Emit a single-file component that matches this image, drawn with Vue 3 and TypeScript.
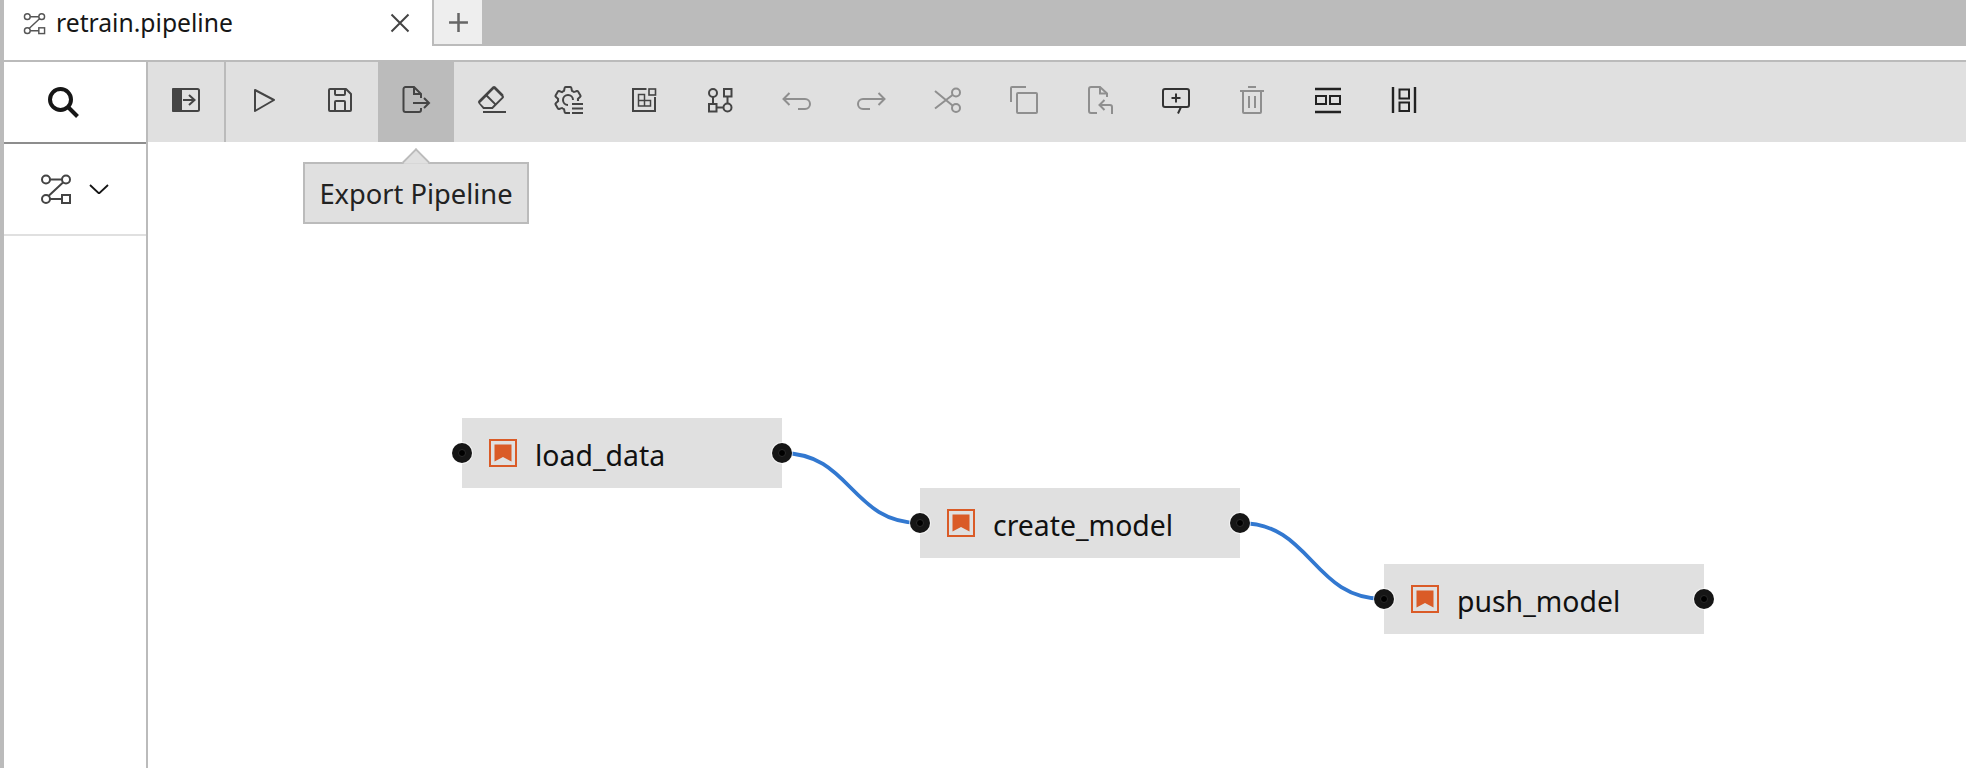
<script setup lang="ts">
interface PipelineNode {
  label: string
  x: number
  y: number
}

const canvasX = 148
const canvasY = 142
const nodes: PipelineNode[] = [
  { label: 'load_data', x: 462, y: 418 },
  { label: 'create_model', x: 920, y: 488 },
  { label: 'push_model', x: 1384, y: 564 },
]

const place = (n: PipelineNode) => ({
  left: `${n.x - canvasX}px`,
  top: `${n.y - canvasY}px`,
})

const links = nodes.slice(0, -1).map((n, i) => {
  const next = nodes[i + 1]
  const x1 = n.x + 320 - canvasX
  const y1 = n.y + 35 - canvasY
  const x2 = next.x - canvasX
  const y2 = next.y + 35 - canvasY
  const mid = (x1 + x2) / 2
  return `M${x1} ${y1}C${mid} ${y1} ${mid} ${y2} ${x2} ${y2}`
})
</script>

<template>
  <div class="page">
    <header class="tabbar">
      <div class="tab">
        <svg class="tab-icon" viewBox="0 0 32 32" fill="none" stroke="currentColor" stroke-width="2">
          <circle cx="6" cy="6.500" r="4" />
          <circle cx="26" cy="6.500" r="4" />
          <circle cx="6" cy="26" r="4" />
          <rect x="22" y="22" width="8" height="8" />
          <path d="M10 6.500H22M10 26H22M23 9.500 8.500 23" />
        </svg>
        <span class="tab-title">retrain.pipeline</span>
        <svg class="tab-close" viewBox="0 0 20 20" fill="none" stroke="currentColor" stroke-width="2">
          <path d="M1.500 1.500 18.500 18.500M18.500 1.500 1.500 18.500" />
        </svg>
      </div>
      <div class="tab-add">
        <svg viewBox="0 0 20 20" fill="none" stroke="currentColor" stroke-width="2.400">
          <path d="M10 1V19M1 10H19" />
        </svg>
      </div>
      <div class="tab-rest"></div>
    </header>

    <div class="body">
      <aside class="sidebar">
        <div class="side-search">
          <svg viewBox="0 0 32 32" fill="none" stroke="#161616" stroke-width="4">
            <circle cx="13.500" cy="13.500" r="10.500" />
            <path d="M21 21 30.500 30.500" />
          </svg>
        </div>
        <div class="side-section">
          <svg class="side-flow" viewBox="0 0 32 32" fill="none" stroke="#444" stroke-width="2">
            <circle cx="6" cy="6.500" r="4" />
            <circle cx="26" cy="6.500" r="4" />
            <circle cx="6" cy="26" r="4" />
            <rect x="22" y="22" width="8" height="8" />
            <path d="M10 6.500H22M10 26H22M23 9.500 8.500 23" />
          </svg>
          <svg class="side-chevron" viewBox="0 0 20 10" fill="none" stroke="#161616" stroke-width="1.800">
            <path d="M1 1 10 9.500 19 1" />
          </svg>
        </div>
      </aside>

      <main class="main">
        <div class="toolbar">
          <button class="tool first">
            <svg viewBox="0 0 32 32" fill="none" stroke="currentColor" stroke-width="2">
              <rect x="3" y="5" width="26" height="22" rx="1.500" />
              <path d="M2 5a1 1 0 0 1 1-1h9v24H3a1 1 0 0 1-1-1Z" fill="currentColor" stroke="none" />
              <path d="M13 16H24M19 11 24.500 16 19 21" />
            </svg>
          </button>
          <div class="divider"></div>
          <button class="tool">
            <svg viewBox="0 0 32 32" fill="none" stroke="currentColor" stroke-width="2">
              <path d="M7 6 26 16 7 27Z" stroke-linejoin="round" />
            </svg>
          </button>
          <button class="tool">
            <svg viewBox="0 0 32 32" fill="currentColor">
              <path d="M27.710 9.290l-5-5A1 1 0 0 0 22 4H6A2 2 0 0 0 4 6V26a2 2 0 0 0 2 2H26a2 2 0 0 0 2-2V10A1 1 0 0 0 27.710 9.290ZM12 6h8v4H12Zm8 20H12V18h8Zm2 0V18a2 2 0 0 0-2-2H12a2 2 0 0 0-2 2v8H6V6h4v4a2 2 0 0 0 2 2h8a2 2 0 0 0 2-2V6.410l4 4V26Z" />
            </svg>
          </button>
          <button class="tool active">
            <svg viewBox="0 0 32 32" fill="none" stroke="currentColor" stroke-width="2">
              <path d="M21 14V10L14 3H5.500A2 2 0 0 0 3.500 5V26A2 2 0 0 0 5.500 28H19A2 2 0 0 0 21 26V24" />
              <path d="M14 3V10H21" />
              <path d="M13 19H28.500M24 14 29 19 24 24" />
            </svg>
          </button>
          <button class="tool">
            <svg viewBox="0 0 32 32" fill="currentColor">
              <path d="M7 27H30v2H7zM27.380 10.510 19.450 2.590a2 2 0 0 0-2.830 0l-14 14a2 2 0 0 0 0 2.830L7.130 25h9.590l10.660-10.660a2 2 0 0 0 0-2.830ZM15.890 23H8L4 19l6.310-6.310 7.930 7.920Zm3.760-3.760-7.920-7.930L18 5 26 12.930Z" />
            </svg>
          </button>
          <button class="tool">
            <svg viewBox="0 0 32 32" fill="none">
              <path fill="currentColor" d="M27 16.760c0-.25 0-.5 0-.76s0-.51 0-.77l1.920-1.680A2 2 0 0 0 29.300 11L26.940 7a2 2 0 0 0-1.730-1 2 2 0 0 0-.64.1l-2.430.82a11.350 11.350 0 0 0-1.310-.75l-.51-2.520a2 2 0 0 0-2-1.610H13.640a2 2 0 0 0-2 1.610l-.51 2.520a11.480 11.480 0 0 0-1.320.75L7.430 6.060A2 2 0 0 0 6.790 6 2 2 0 0 0 5.060 7L2.700 11a2 2 0 0 0 .41 2.510L5 15.240c0 .25 0 .5 0 .76s0 .51 0 .77L3.110 18.450A2 2 0 0 0 2.700 21L5.060 25a2 2 0 0 0 1.730 1 2 2 0 0 0 .64-.1l2.430-.82a11.350 11.350 0 0 0 1.310.75l.51 2.520a2 2 0 0 0 2 1.610h4.720a2 2 0 0 0 2-1.610l.51-2.520a11.480 11.480 0 0 0 1.320-.75l2.430.82a2 2 0 0 0 .64.1 2 2 0 0 0 1.730-1L29.300 21a2 2 0 0 0-.41-2.510ZM25.210 24l-3.430-1.160a8.860 8.860 0 0 1-2.710 1.570L18.360 28H13.640l-.71-3.550a9.360 9.360 0 0 1-2.700-1.570L6.790 24 4.430 20l2.720-2.400a8.900 8.900 0 0 1 0-3.130L4.430 12 6.790 8l3.430 1.160a8.860 8.860 0 0 1 2.710-1.570L13.640 4h4.720l.71 3.550a9.360 9.360 0 0 1 2.700 1.570L25.210 8l2.360 4-2.720 2.400a8.900 8.900 0 0 1 0 3.130L27.570 20Z" />
              <rect x="18" y="17" width="14" height="14" fill="#e0e0e0" />
              <path stroke="currentColor" stroke-width="2" d="M21 16A5 5 0 1 0 16 21" />
              <path stroke="currentColor" stroke-width="2" d="M20 20H31M20 24.500H31M20 29H31" />
            </svg>
          </button>
          <button class="tool">
            <svg viewBox="0 0 32 32" fill="none" stroke="currentColor" stroke-width="2">
              <path d="M18.500 5H5V27H27V13" />
              <rect x="21" y="5" width="6.500" height="6" stroke-width="1.600" />
              <path d="M10.500 10.500H16.500V16.500H22.500V22H10.500ZM10.500 16.500H16.500V22" stroke-width="1.500" />
            </svg>
          </button>
          <button class="tool">
            <svg viewBox="0 0 32 32" fill="none" stroke="currentColor" stroke-width="2">
              <circle cx="9" cy="9" r="4" />
              <rect x="20" y="5" width="7.500" height="7.500" />
              <rect x="5" y="20" width="7.500" height="7.500" />
              <circle cx="23.500" cy="23.500" r="4" />
              <path d="M9 13V20M23.500 12.500V19.500M12.500 23.500H19.500" />
            </svg>
          </button>
          <button class="tool disabled">
            <svg viewBox="0 0 32 32" fill="none" stroke="currentColor" stroke-width="2">
              <path d="M3 15H25A5 5 0 0 1 25 25H18M9.500 9 3.500 15 9.500 21" />
            </svg>
          </button>
          <button class="tool disabled">
            <svg viewBox="0 0 32 32" fill="none" stroke="currentColor" stroke-width="2">
              <path d="M29 15H7A5 5 0 0 0 7 25H14M22.500 9 28.500 15 22.500 21" />
            </svg>
          </button>
          <button class="tool disabled">
            <svg viewBox="0 0 32 32" fill="none" stroke="currentColor" stroke-width="2">
              <circle cx="24" cy="8.500" r="4" />
              <circle cx="24" cy="24" r="4" />
              <path d="M3 7 20.500 21.500M3 24.500 20.500 11" />
            </svg>
          </button>
          <button class="tool disabled">
            <svg viewBox="0 0 32 32" fill="currentColor">
              <path d="M28 10V28H10V10H28m0-2H10a2 2 0 0 0-2 2V28a2 2 0 0 0 2 2H28a2 2 0 0 0 2-2V10a2 2 0 0 0-2-2Z" />
              <path d="M4 18H2V4A2 2 0 0 1 4 2H18V4H4Z" />
            </svg>
          </button>
          <button class="tool disabled">
            <svg viewBox="0 0 32 32" fill="none" stroke="currentColor" stroke-width="2">
              <path d="M23 13V9.500L16 3H7A2 2 0 0 0 5 5V27A2 2 0 0 0 7 29H13" />
              <path d="M16 3V9.500H23" />
              <path d="M28 30V23A2 2 0 0 0 26 21H16M20.500 16 15.500 21 20.500 26" />
            </svg>
          </button>
          <button class="tool dark">
            <svg viewBox="0 0 32 32" fill="none" stroke="currentColor" stroke-width="2">
              <path d="M5 5H27A2 2 0 0 1 29 7V21A2 2 0 0 1 27 23H21L18 29.500M21 23H5A2 2 0 0 1 3 21V7A2 2 0 0 1 5 5" />
              <path d="M16 9.500V18.500M11.500 14H20.500" />
            </svg>
          </button>
          <button class="tool disabled">
            <svg viewBox="0 0 32 32" fill="currentColor">
              <path d="M12 12h2v12h-2zM18 12h2v12h-2z" />
              <path d="M4 6v2h2v20a2 2 0 0 0 2 2h16a2 2 0 0 0 2-2V8h2V6zm4 22V8h16v20zM12 2h8v2h-8z" />
            </svg>
          </button>
          <button class="tool black">
            <svg viewBox="0 0 32 32" fill="none" stroke="currentColor" stroke-width="2">
              <path d="M3 5H29M3 28H29" stroke-width="2.400" />
              <rect x="4" y="12" width="10" height="8" />
              <rect x="18" y="12" width="10" height="8" />
            </svg>
          </button>
          <button class="tool black">
            <svg viewBox="0 0 32 32" fill="none" stroke="currentColor" stroke-width="2">
              <path d="M5 3V29M27 3V29" stroke-width="2.400" />
              <rect x="11.500" y="5.500" width="9.500" height="9" />
              <rect x="11.500" y="18.500" width="9.500" height="8.500" />
            </svg>
          </button>
        </div>

        <div class="canvas">
          <svg class="links" width="1818" height="626" fill="none" stroke="#3278d0" stroke-width="3.800">
            <path v-for="(d, i) in links" :key="i" :d="d" />
          </svg>

          <div v-for="n in nodes" :key="n.label" class="node" :style="place(n)">
            <span class="port left"><i></i></span>
            <span class="node-icon">
              <svg viewBox="0 0 28 28">
                <rect x="1" y="1" width="26" height="26" fill="none" stroke="#da5b27" stroke-width="2" />
                <path d="M5.500 5.500H22.500V22.500L14 18 5.500 22.500Z" fill="#da5b27" />
              </svg>
            </span>
            <span class="node-label">{{ n.label }}</span>
            <span class="port right"><i></i></span>
          </div>

          <div class="tooltip">Export Pipeline</div>
        </div>
      </main>
    </div>
  </div>
</template>

<style>
html,
body {
  margin: 0;
  background: #fff;
}
</style>

<style scoped>
.page {
  width: 1966px;
  height: 768px;
  box-sizing: border-box;
  border-left: 4px solid #bbb;
  display: flex;
  flex-direction: column;
  overflow: hidden;
  font-family: "Noto Sans", sans-serif;
  color: #161616;
}
.tabbar {
  height: 62px;
  flex: none;
  box-sizing: border-box;
  border-bottom: 2px solid #bbb;
  display: flex;
  align-items: flex-start;
}
.tab {
  width: 428px;
  height: 46px;
  box-sizing: border-box;
  padding-left: 19px;
  display: flex;
  align-items: center;
  flex: none;
}
.tab-icon {
  width: 23px;
  height: 23px;
  color: #555;
  flex: none;
}
.tab-title {
  margin-left: 10px;
  font-family: "Noto Sans", sans-serif;
  font-size: 24.700px;
  line-height: 46px;
  white-space: nowrap;
}
.tab-close {
  width: 20px;
  height: 20px;
  margin-left: auto;
  margin-right: 22px;
  color: #444;
  flex: none;
}
.tab-add {
  width: 50px;
  height: 46px;
  box-sizing: border-box;
  background: #eee;
  border-left: 2px solid #bbb;
  border-bottom: 2px solid #bbb;
  display: flex;
  align-items: center;
  justify-content: center;
  color: #666;
  flex: none;
}
.tab-add svg {
  width: 21px;
  height: 21px;
}
.tab-rest {
  flex: 1;
  height: 46px;
  background: #bbb;
}
.body {
  flex: 1;
  display: flex;
  min-height: 0;
}
.sidebar {
  width: 144px;
  flex: none;
  box-sizing: border-box;
  border-right: 2px solid #bbb;
  display: flex;
  flex-direction: column;
}
.side-search {
  height: 82px;
  box-sizing: border-box;
  border-bottom: 2px solid #8d8d8d;
  display: flex;
  align-items: center;
  padding-left: 43px;
  padding-bottom: 1px;
}
.side-search svg {
  width: 32px;
  height: 32px;
}
.side-section {
  height: 92px;
  box-sizing: border-box;
  border-bottom: 2px solid #e0e0e0;
  padding-left: 36px;
  display: flex;
  align-items: center;
}
.side-flow {
  width: 32px;
  height: 32px;
  flex: none;
}
.side-chevron {
  width: 20px;
  height: 10px;
  margin-left: 17px;
  flex: none;
}
.main {
  flex: 1;
  display: flex;
  flex-direction: column;
  min-width: 0;
}
.toolbar {
  height: 80px;
  flex: none;
  background: #e0e0e0;
  display: flex;
}
.tool {
  width: 76px;
  height: 80px;
  flex: none;
  padding: 22px 0 0;
  border: 0;
  background: none;
  display: flex;
  justify-content: center;
  align-items: flex-start;
  color: #444;
}
.tool svg {
  width: 32px;
  height: 32px;
  display: block;
}
.tool.active {
  background: #bbb;
}
.tool.disabled {
  color: #8f8f8f;
}
.tool.dark {
  color: #333;
}
.tool.black {
  color: #222;
}
.divider {
  width: 2px;
  background: #bbb;
  flex: none;
}
.canvas {
  flex: 1;
  position: relative;
  background: #fff;
}
.links {
  position: absolute;
  left: 0;
  top: 0;
}
.node {
  position: absolute;
  width: 320px;
  height: 70px;
  background: #e0e0e0;
  display: flex;
  align-items: center;
  padding-left: 27px;
  box-sizing: border-box;
}
.node-icon {
  width: 28px;
  height: 28px;
  flex: none;
  margin-top: -1px;
}
.node-icon svg {
  display: block;
  width: 28px;
  height: 28px;
}
.node-label {
  margin-left: 18px;
  margin-top: 4px;
  font-family: "Noto Sans", sans-serif;
  font-size: 28.400px;
  line-height: 36px;
  color: #111;
  white-space: nowrap;
}
.port {
  position: absolute;
  top: 25px;
  width: 20px;
  height: 20px;
  border-radius: 50%;
  background: #161616;
  box-shadow: 0 0 0 1px rgba(255, 255, 255, 0.6);
  display: flex;
  align-items: center;
  justify-content: center;
}
.port i {
  width: 8px;
  height: 8px;
  box-sizing: border-box;
  border-radius: 50%;
  background: #000;
  border: 1px solid #2a2a2a;
}
.port.left {
  left: -10px;
}
.port.right {
  right: -10px;
}
.tooltip {
  position: absolute;
  left: 155px;
  top: 20px;
  width: 226px;
  height: 62px;
  box-sizing: border-box;
  background: #e0e0e0;
  border: 2px solid #bbb;
  display: flex;
  align-items: center;
  justify-content: center;
  font-family: "Noto Sans", sans-serif;
  font-size: 27.300px;
  color: #222;
  white-space: nowrap;
}
.tooltip::before {
  content: "";
  position: absolute;
  left: 101px;
  top: -12px;
  width: 20px;
  height: 20px;
  box-sizing: border-box;
  background: #e0e0e0;
  border-left: 2px solid #bbb;
  border-top: 2px solid #bbb;
  transform: rotate(45deg);
  clip-path: polygon(0 0, 100% 0, 100% 12%, 12% 100%, 0 100%);
}
</style>
